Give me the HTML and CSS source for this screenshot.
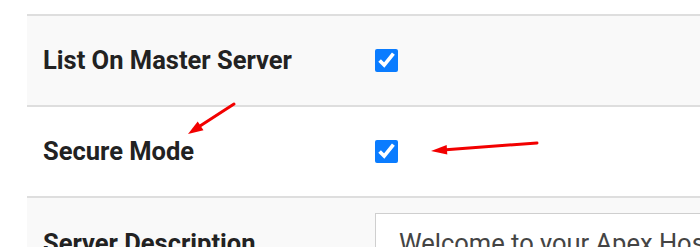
FILE: index.html
```html
<!DOCTYPE html>
<html lang="en">
<head>
    <meta charset="UTF-8">
    <meta name="viewport" content="width=device-width, initial-scale=1.0">
    <title>Server Settings</title>
    <link rel="stylesheet" href="styles.css">
</head>
<body>
    <main class="settings">
        <div class="setting-row striped">
            <div class="setting-label">List On Master Server</div>
            <div class="setting-value">
                <input type="checkbox" class="setting-check" checked>
            </div>
        </div>
        <div class="setting-row">
            <div class="setting-label">Secure Mode</div>
            <div class="setting-value">
                <input type="checkbox" class="setting-check" checked>
            </div>
        </div>
        <div class="setting-row striped top">
            <div class="setting-label">Server Description</div>
            <div class="setting-value">
                <textarea class="setting-text" readonly>Welcome to your Apex Hosting server!</textarea>
            </div>
        </div>
    </main>

    <!-- annotation arrows drawn over the screenshot -->
    <svg class="annotations" width="700" height="247" viewBox="0 0 700 247">
        <line x1="234" y1="104" x2="200" y2="126" stroke="#f20000" stroke-width="3" stroke-linecap="round"/>
        <polygon points="188,134 203.5,130.2 197.7,121.4" fill="#f20000"/>
        <line x1="537" y1="143" x2="446" y2="149.8" stroke="#f20000" stroke-width="3" stroke-linecap="round"/>
        <polygon points="431,151 447.3,154.5 446.7,145.1" fill="#f20000"/>
    </svg>
</body>
</html>
```

FILE: styles.css
```css
* {
    margin: 0;
    padding: 0;
    box-sizing: border-box;
}

html, body {
    overflow: hidden;
}

body {
    font-family: Roboto, 'Liberation Sans', sans-serif;
    background-color: #fff;
    color: #222;
    width: 700px;
    height: 247px;
    position: relative;
}

.settings {
    margin: 14px 0 0 27px;
    width: 900px;
}

.setting-row {
    display: grid;
    grid-template-columns: 332px 1fr;
    align-items: center;
    height: 91px;
    border-top: 2px solid #dedede;
}

.setting-row.striped {
    background-color: #f9f9f9;
}

.setting-row.top {
    align-items: start;
    height: 140px;
}

.setting-label {
    padding: 0 16px;
    font-size: 25.5px;
    font-weight: 700;
    line-height: 1.2;
    color: #222;
}

.setting-row.top .setting-label {
    padding-top: 30px;
}

.setting-value {
    padding: 0 16px;
    display: flex;
    align-items: center;
}

.setting-row.top .setting-value {
    padding-top: 15px;
}

.setting-check {
    width: 23px;
    height: 23px;
    margin: 0;
    accent-color: #0a7cff;
}

.setting-text {
    width: 520px;
    height: 110px;
    padding: 14px 23px;
    border: 1px solid #cfcfcf;
    background-color: #fff;
    font-family: Roboto, 'Liberation Sans', sans-serif;
    font-size: 25.5px;
    line-height: 1.2;
    color: #444;
    resize: none;
    overflow: hidden;
}

.annotations {
    position: absolute;
    top: 0;
    left: 0;
    pointer-events: none;
}
```
